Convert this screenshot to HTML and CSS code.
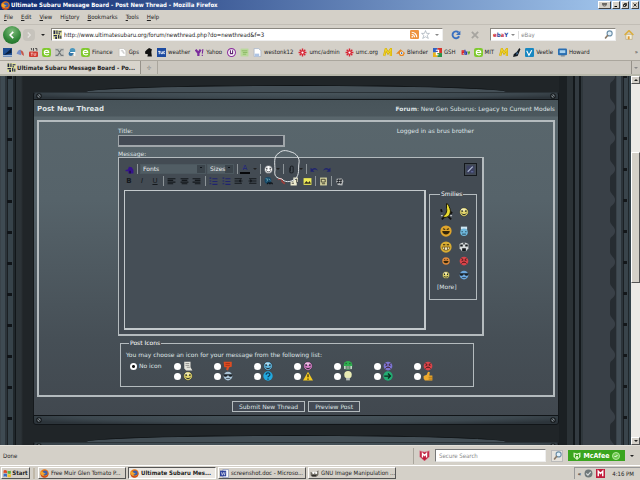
FILE: index.html
```html
<!DOCTYPE html>
<html lang="en">
  <head>
    <meta charset="UTF-8" />
    <meta name="viewport" content="width=device-width, initial-scale=1.0" />
    <title>Ultimate Subaru Message Board - Post New Thread</title>
    <link rel="stylesheet" href="styles.css" />
  </head>
  <body>
    <!-- shared icons -->
    <svg class="sprite" aria-hidden="true">
      <symbol id="fox" viewBox="0 0 16 16">
        <circle cx="8" cy="8" r="7.5" fill="#e2751c" />
        <circle cx="9" cy="7" r="4.5" fill="#3a5fae" />
        <path d="M1 4c2 1 4 0 6 3l3 1c-1 2-4 1-4 3s4 2 7-1c-1 4-10 6-12-2z" fill="#f5a52b" />
        <path d="M1 8c0 5 4 8 8 7s6-4 6-8c-1 4-4 6-7 6S2 11 1 8z" fill="#c9461a" />
      </symbol>
      <symbol id="site" viewBox="0 0 16 16">
        <path fill="#dfe0a0" d="M0 0h16v16H0z" />
        <path fill="#20264c" d="M1 1h3v6H1zM6 1h2v6H6zM10 2h5v2h-5zM10 5h2v3h-2zM1 9h6v2H1zM4 12h3v4H4zM9 9h2v6H9zM12 10h3v2h-3zM12 13h3v2h-3z" />
      </symbol>
      <symbol id="smile" viewBox="0 0 16 16">
        <circle cx="8" cy="8" r="7" fill="currentColor" stroke="#2d343b" stroke-width="1" />
        <ellipse cx="7" cy="4.500" rx="4" ry="2" fill="#fff" opacity=".5" />
        <path d="M5 5v3M11 5v3" stroke="#23272b" stroke-width="2" />
        <path d="M4 10c2 3 6 3 8 0" fill="none" stroke="#23272b" stroke-width="1.500" />
      </symbol>
      <symbol id="grin" viewBox="0 0 16 16">
        <circle cx="8" cy="8" r="7.500" fill="currentColor" />
        <path d="M4 5l3 1M12 5L9 6" stroke="#33260b" stroke-width="1.500" />
        <path d="M3 8h10c0 6-10 6-10 0z" fill="#33260b" />
      </symbol>
      <symbol id="sad" viewBox="0 0 16 16">
        <circle cx="8" cy="8" r="7" fill="currentColor" />
        <path d="M4 4l3 2M12 4L9 6M5 6v2M11 6v2" stroke="#3b1414" stroke-width="1.500" />
        <path d="M4 12c2-3 6-3 8 0" fill="none" stroke="#3b1414" stroke-width="1.500" />
      </symbol>
      <symbol id="cool" viewBox="0 0 16 16">
        <circle cx="8" cy="8" r="7" fill="currentColor" />
        <path d="M1 5h14v2c-1 3-5 3-6 0H7c-1 3-5 3-6 0z" fill="#1b2228" />
        <path d="M5 12h6" stroke="#1b2228" />
      </symbol>
      <symbol id="lines" viewBox="0 0 16 16">
        <path d="M1 3h14M1 6h10M1 9h14M1 12h10" stroke="currentColor" stroke-width="2" />
      </symbol>
      <symbol id="list" viewBox="0 0 16 16">
        <path d="M1 2h3M1 7h3M1 12h3M6 3h9M6 8h9M6 13h9" stroke="currentColor" stroke-width="2" />
      </symbol>
      <symbol id="indent" viewBox="0 0 16 16">
        <path d="M2 3h13M8 7h7M2 11h13M1 7h6M4 5l3 2-3 2" fill="none" stroke="currentColor" stroke-width="2" />
      </symbol>
      <symbol id="undo" viewBox="0 0 16 16">
        <path d="M1 5v7h7L5 9c3-2 6-1 9 1-2-5-6-6-10-3z" fill="currentColor" />
      </symbol>
      <symbol id="burst" viewBox="0 0 16 16">
        <path d="M8 1v14M1 8h14M3 3l10 10M13 3L3 13" stroke="#d82433" stroke-width="2.500" />
        <circle cx="8" cy="8" r="2" fill="#fff" />
      </symbol>
      <symbol id="emm" viewBox="0 0 16 16">
        <path d="M2 14l3-12 4 7 5-7v12" fill="none" stroke="#d0a800" stroke-width="4" />
        <path d="M2 14l3-12 4 7 5-7v12" fill="none" stroke="#efd42c" stroke-width="2" />
      </symbol>
      <symbol id="ebadge" viewBox="0 0 16 16">
        <rect width="16" height="16" rx="4" fill="#7fc92e" />
        <path d="M4 8h8c0-5-8-5-8 0s6 5 8 3" fill="none" stroke="#fff" stroke-width="2" />
      </symbol>
      <symbol id="loupe" viewBox="0 0 16 16">
        <circle cx="10" cy="6" r="4.500" fill="#e1f0fa" stroke="#6c8fa8" stroke-width="2" />
        <path d="M7 9l-5 6" stroke="#8a7a68" stroke-width="3" />
      </symbol>
      <symbol id="rivet" viewBox="0 0 16 16">
        <circle cx="8" cy="8" r="6" fill="#778086" stroke="#14181a" stroke-width="3" />
        <path d="M4 4l8 8" stroke="#14181a" stroke-width="2" />
      </symbol>
      <symbol id="shield" viewBox="0 0 16 16">
        <path d="M1 1l7 2 7-2v9l-7 6-7-6z" fill="#c01c3c" stroke="#d9a5ae" />
        <path d="M5 11V5l3 3 3-3v6" fill="none" stroke="#fff" stroke-width="2" />
      </symbol>
    </svg>

    <header class="titlebar">
      <svg class="icon"><use href="#fox" /></svg>
      <h1>Ultimate Subaru Message Board - Post New Thread - Mozilla Firefox</h1>
      <div class="winbtns">
        <button class="wide" aria-label="Roll up"><svg viewBox="0 0 12 8"><path d="M1 1h10M2 3h8L8 6H4z" fill="none" stroke="#000" /></svg></button>
        <button aria-label="Minimize"><svg viewBox="0 0 8 8"><path d="M1 7h5" stroke="#000" stroke-width="2" /></svg></button>
        <button aria-label="Restore"><svg viewBox="0 0 8 8"><path d="M3 3V1h4v4H5M1 3h4v4H1z" fill="none" stroke="#000" stroke-width="1.500" /></svg></button>
        <button class="close" aria-label="Close"><svg viewBox="0 0 8 8"><path d="M1 1l6 6M7 1L1 7" stroke="#000" stroke-width="1.500" /></svg></button>
      </div>
    </header>

    <nav class="menubar">
      <a href="#"><u>F</u>ile</a>
      <a href="#"><u>E</u>dit</a>
      <a href="#"><u>V</u>iew</a>
      <a href="#">Hi<u>s</u>tory</a>
      <a href="#"><u>B</u>ookmarks</a>
      <a href="#"><u>T</u>ools</a>
      <a href="#"><u>H</u>elp</a>
    </nav>

    <div class="navbar">
      <button class="back" aria-label="Back"><svg viewBox="0 0 16 16"><path d="M10 3L5 8l5 5" fill="none" stroke="#fff" stroke-width="2.500" /></svg></button>
      <button class="forward" aria-label="Forward"><svg viewBox="0 0 16 16"><path d="M6 4l4 4-4 4" fill="none" stroke="#e6e4df" stroke-width="2" /></svg></button>
      <span class="arrow"></span>
      <div class="urlbox">
        <svg class="icon"><use href="#site" /></svg>
        <input type="text" aria-label="Address" value="http://www.ultimatesubaru.org/forum/newthread.php?do=newthread&amp;f=3" />
        <svg class="icon" viewBox="0 0 16 16"><rect width="16" height="16" rx="2" fill="#ee9440" /><path d="M3 8c3 0 5 2 5 5M3 4c5 0 9 4 9 9" fill="none" stroke="#fff" stroke-width="2" /><circle cx="4" cy="12" r="1.500" fill="#fff" /></svg>
        <svg class="icon" viewBox="0 0 16 16"><path d="M8 1l2 5h5l-4 3.500 2 5.500-5-3-5 3 2-5.500L1 6h5z" fill="#fff" stroke="#8b98a4" /></svg>
        <span class="arrow light"></span>
      </div>
      <button class="plain" aria-label="Reload"><svg viewBox="0 0 16 16"><path d="M13 10a5.500 5.500 0 1 1-1-6" fill="none" stroke="#3a70c0" stroke-width="3" /><path d="M15 1v7H8z" fill="#3a70c0" /></svg></button>
      <button class="plain" aria-label="Stop"><svg viewBox="0 0 16 16"><path d="M3 3l10 10M13 3L3 13" stroke="#a7a5a0" stroke-width="3" /></svg></button>
      <div class="searchbox">
        <span class="engine"><i>e</i>b<i>a</i>Y</span>
        <span class="arrow light"></span>
        <input type="text" aria-label="Search" placeholder="eBay" />
        <svg class="icon"><use href="#loupe" /></svg>
      </div>
      <button class="plain home" aria-label="Home"><svg viewBox="0 0 16 16"><path d="M3 7h10v8H3z" fill="#f6f0d8" stroke="#b4a476" /><path d="M1 8l7-7 7 7" fill="none" stroke="#dcae3c" stroke-width="2.500" /><path d="M6 10h3v5H6z" fill="#e09a2c" /></svg></button>
    </div>

    <nav class="bookmarks">
      <a href="#" aria-label="Sail"><svg class="icon" viewBox="0 0 16 16"><path d="M0 0h16v16H0z" fill="#1f4f92" /><path d="M1 13L15 1v8z" fill="#0a2040" /><path d="M0 13h16v2H0z" fill="#e8eef4" /></svg></a>
      <a href="#" aria-label="Bird"><svg class="icon" viewBox="0 0 16 16"><path d="M1 10c2-6 6-8 8-6v9z" fill="#7690c8" /><path d="M8 4c4 0 6 4 6 10l-4-3z" fill="#c5564a" /></svg></a>
      <a href="#" aria-label="Video"><svg class="icon" viewBox="0 0 16 16"><path d="M4 0l1 4M8 0v5M11 1h3v4" stroke="#333" stroke-width="1.500" fill="none" /><rect y="6" width="16" height="10" rx="2" fill="#d03a30" /><path d="M3 9h4M5 9v5M9 9v4h3V9" stroke="#fff" fill="none" /></svg></a>
      <a href="#" aria-label="E"><svg class="icon"><use href="#ebadge" /></svg></a>
      <a href="#" aria-label="X"><svg class="icon" viewBox="0 0 16 16"><path d="M0 0h16v16H0z" fill="#c4c5c0" /><path d="M1 3h4l6 10h4M15 3h-4L5 13H1" fill="none" stroke="#73787a" stroke-width="2" /></svg></a>
      <a href="#" aria-label="Swirl"><svg class="icon" viewBox="0 0 16 16"><circle cx="8" cy="5" r="5" fill="#4b97bd" /><circle cx="5" cy="10" r="4" fill="#3476a8" /><path d="M4 8h8v6" fill="none" stroke="#fff" stroke-width="2" /></svg></a>
      <a href="#"><svg class="icon"><use href="#ebadge" /></svg>Finance</a>
      <a href="#"><svg class="icon" viewBox="0 0 16 16"><path d="M2 1h8l4 4v10H2z" fill="#fff" stroke="#b8b6b0" /><path d="M5 5h4v4h3" fill="none" stroke="#999" /></svg>Gps</a>
      <a href="#" aria-label="Cat"><svg class="icon" viewBox="0 0 16 16"><path d="M5 3l4-3 5 2-1 5 1 8H6l1-4-5-1V6z" fill="#111" /></svg></a>
      <a href="#"><svg class="icon" viewBox="0 0 16 16"><path d="M0 0h16v16H0z" fill="#1d4ba0" /><path d="M2 6h4M4 6v5M7 6v4h3V6M14 6h-2v4h2" fill="none" stroke="#fff" stroke-width="1.500" /></svg>weather</a>
      <a href="#"><svg class="icon" viewBox="0 0 16 16"><path d="M1 3l5 6 4-6M6 9v5" fill="none" stroke="#7b2c9d" stroke-width="4" /><path d="M14 2l-1 8M12 13h2" stroke="#7b2c9d" stroke-width="2" /></svg>Yahoo</a>
      <a href="#" aria-label="Power"><svg class="icon" viewBox="0 0 16 16"><circle cx="8" cy="8" r="7" fill="#fff" stroke="#8a2f9b" stroke-width="2" /><path d="M6 4v6h4V4" fill="none" stroke="#5d2170" stroke-width="2" /></svg></a>
      <a href="#" aria-label="Notes"><svg class="icon" viewBox="0 0 16 16"><path d="M1 1h14v14H1z" fill="#b9d99a" /><path d="M3 5h10M5 8h8M5 11h6" stroke="#6ea544" /></svg></a>
      <a href="#"><svg class="icon" viewBox="0 0 16 16"><path d="M2 1h8l4 4v10H2z" fill="#fff" stroke="#8fa2c0" /><path d="M3 10h8v5H3z" fill="#aec4e4" /></svg>westonk12</a>
      <a href="#"><svg class="icon"><use href="#burst" /></svg>umc/admin</a>
      <a href="#"><svg class="icon"><use href="#burst" /></svg>umc.org</a>
      <a href="#" aria-label="M"><svg class="icon"><use href="#emm" /></svg></a>
      <a href="#"><svg class="icon" viewBox="0 0 16 16"><path d="M0 10l8-8 8 7-3 5H7L5 10z" fill="#e58722" /><circle cx="10" cy="9" r="3" fill="#fff" /><circle cx="10" cy="9" r="1.500" fill="#2560a5" /></svg>Blender</a>
      <a href="#"><svg class="icon" viewBox="0 0 16 16"><path d="M0 0h8v8H0z" fill="#2f62c4" /><path d="M8 0h8v9H8z" fill="#d6332b" /><path d="M0 8h8v8H0z" fill="#e9b31b" /><path d="M8 9h8v7H8z" fill="#2c9147" /><path d="M5 4h5v4H6v4h4" fill="none" stroke="#fff" stroke-width="2" /></svg>GSH</a>
      <a href="#" aria-label="eBay"><svg class="icon" viewBox="0 0 16 16"><path d="M1 8h4V5H2v6h3" fill="none" stroke="#d22" stroke-width="2" /><path d="M7 3v8h3V7H7" fill="none" stroke="#23a" stroke-width="2" /><path d="M12 6l2 4 2-4" fill="none" stroke="#6a2" stroke-width="2" /></svg></a>
      <a href="#"><svg class="icon"><use href="#ebadge" /></svg>MIT</a>
      <a href="#" aria-label="M"><svg class="icon"><use href="#emm" /></svg></a>
      <a href="#" aria-label="Pen"><svg class="icon" viewBox="0 0 16 16"><path d="M13 0l2 2-5 12-8 2 1-5 6-5z" fill="#141a20" /><path d="M8 7l3 2-3 4" fill="#4c7dac" /></svg></a>
      <a href="#"><svg class="icon" viewBox="0 0 16 16"><rect width="16" height="16" rx="2" fill="#1887c0" /><path d="M3 5l4 8 5-9" fill="none" stroke="#fff" stroke-width="2" /></svg>Veetle</a>
      <a href="#"><svg class="icon" viewBox="0 0 16 16"><rect y="1" width="16" height="12" rx="2" fill="#2b6fb2" /><path d="M3 4h10v5H3z" fill="#a9d0ec" /><path d="M5 14h7" stroke="#6a7c8c" stroke-width="2" /></svg>Howard</a>
      <span class="more">»</span>
    </nav>

    <div class="tabs">
      <div class="tab"><svg class="icon"><use href="#site" /></svg>Ultimate Subaru Message Board - Po...</div>
      <button class="newtab" aria-label="New tab">✢</button>
      <button class="alltabs" aria-label="All tabs"><span class="arrow light"></span></button>
    </div>

    <div class="viewport">
      <div class="rail left"></div>
      <main class="page">
        <div class="plate"></div>
        <div class="frame top">
          <svg class="icon"><use href="#rivet" /></svg>
          <svg class="icon"><use href="#rivet" /></svg>
        </div>
        <div class="panel">
          <div class="heading">
            <h2>Post New Thread</h2>
            <p><b>Forum</b>: New Gen Subarus: Legacy to Current Models</p>
          </div>
          <form class="thread" id="thread">
            <div class="fields">
              <div class="meta">
                <div class="titlefield">
                  <label for="title">Title:</label>
                  <input type="text" id="title" />
                </div>
                <p>Logged in as brus brother</p>
              </div>
              <label for="message">Message:</label>
              <div class="editor">
                <div class="tools">
                  <button type="button" aria-label="Remove formatting"><svg viewBox="0 0 16 16"><path d="M1 9l4-1 2-5 5 1 3 5v6H6v-4H1z" fill="#35128c" /><path d="M9 10v5" stroke="#15082d" stroke-width="2" /></svg></button>
                  <span class="sep"></span>
                  <select class="fonts" aria-label="Font"><option>Fonts</option></select>
                  <select class="sizes" aria-label="Size"><option>Sizes</option></select>
                  <span class="sep"></span>
                  <button type="button" class="color" aria-label="Color">A</button>
                  <span class="arrow"></span>
                  <span class="sep"></span>
                  <button type="button" class="white" aria-label="Smilies"><svg><use href="#smile" /></svg></button>
                  <span class="arrow"></span>
                  <span class="sep"></span>
                  <button type="button" aria-label="Attach"><svg viewBox="0 0 16 16"><path d="M5 5v7c0 3 6 3 6 0V4c0-3-5-3-5 0v7" fill="none" stroke="#1c2126" stroke-width="2" /></svg></button>
                  <span class="arrow"></span>
                  <span class="sep"></span>
                  <button type="button" class="navy" aria-label="Undo"><svg><use href="#undo" /></svg></button>
                  <button type="button" class="navy flip" aria-label="Redo"><svg><use href="#undo" /></svg></button>
                  <button type="button" class="mode" aria-label="Switch mode"><svg viewBox="0 0 16 16"><path d="M1 1h14v14H1z" fill="#3c4161" /><path d="M3 12l9-9" stroke="#aebad0" stroke-width="2" /><path d="M9 12h4" stroke="#6670a0" stroke-width="2" /></svg></button>
                </div>
                <div class="tools">
                  <button type="button" aria-label="Bold"><b>B</b></button>
                  <button type="button" aria-label="Italic"><i>I</i></button>
                  <button type="button" aria-label="Underline"><u>U</u></button>
                  <span class="sep"></span>
                  <button type="button" aria-label="Left"><svg><use href="#lines" /></svg></button>
                  <button type="button" aria-label="Center"><svg viewBox="0 0 16 16"><path d="M1 3h14M3 6h10M1 9h14M3 12h10" stroke="#15191d" stroke-width="2" /></svg></button>
                  <button type="button" class="flip" aria-label="Right"><svg><use href="#lines" /></svg></button>
                  <span class="sep"></span>
                  <button type="button" class="navy" aria-label="Numbers"><svg><use href="#list" /></svg></button>
                  <button type="button" class="navy" aria-label="Bullets"><svg><use href="#list" /></svg></button>
                  <button type="button" class="flip" aria-label="Outdent"><svg><use href="#indent" /></svg></button>
                  <button type="button" aria-label="Indent"><svg><use href="#indent" /></svg></button>
                  <span class="sep"></span>
                  <button type="button" aria-label="Link"><svg viewBox="0 0 16 16"><circle cx="7" cy="6" r="6" fill="#174866" /><path d="M3 3l4 1-2 4M9 3l2 3" stroke="#69a8b8" fill="none" stroke-width="1.500" /><path d="M6 13c0-4 5-3 5 0M10 13c0-4 5-3 5 0" fill="none" stroke="#0b1015" stroke-width="2" /></svg></button>
                  <button type="button" aria-label="Unlink"><svg viewBox="0 0 16 16"><path d="M2 5c4-5 8 0 7 3l5 4" fill="none" stroke="#98403c" stroke-width="3" /></svg></button>
                  <button type="button" aria-label="Email"><svg viewBox="0 0 16 16"><path d="M6 1h8v8H6zM1 8h11v7H1z" fill="#eeeccf" /><path d="M8 4h4v6M3 11h4" fill="none" stroke="#222" stroke-width="1.500" /></svg></button>
                  <button type="button" aria-label="Image"><svg viewBox="0 0 16 16"><path d="M1 2h14v12H1z" fill="#ecea55" /><path d="M2 12l4-5 3 3 3-3 2 5z" fill="#342f20" /></svg></button>
                  <span class="sep"></span>
                  <button type="button" aria-label="Quote"><svg viewBox="0 0 16 16"><path d="M2 1h12v14H2z" fill="#d8d5a0" /><path d="M4 4h7v5H4zM5 12h6" fill="none" stroke="#302f24" stroke-width="1.500" /></svg></button>
                  <span class="sep"></span>
                  <button type="button" aria-label="Code"><svg viewBox="0 0 16 16"><path d="M3 3l9-1 3 5-2 8-8-1-3-5z" fill="#b7babb" /><path d="M7 3L5 12M11 3l-1 9M3 6h9M3 10h9" stroke="#14181c" stroke-width="1.500" /></svg></button>
                </div>
                <div class="writing">
                  <textarea id="message"></textarea>
                  <fieldset class="smilies">
                    <legend>Smilies</legend>
                    <div class="smilegrid">
                      <svg class="banana" viewBox="0 0 14 18"><path d="M2 9L1 6M11 11l2-2M5 14l-3 3M9 14l3 3" stroke="#111" stroke-width="2" /><path d="M7 0l2 1c1 3 3 6 2 9-1 4-5 6-8 4 3-2 5-5 4-9z" fill="#e8da2f" stroke="#171507" /><path d="M1 13h2M11 13h2" stroke="#eee" /></svg>
                      <svg class="c-yellow"><use href="#smile" /></svg>
                      <svg class="c-gold big"><use href="#grin" /></svg>
                      <svg class="c-sky" viewBox="0 0 16 16"><path d="M3 1h10v5H3z" fill="#cfe6f2" /><circle cx="8" cy="10" r="6" fill="#6fb8dd" /><path d="M5 8v2M11 8v2M5 13h6" stroke="#24404f" stroke-width="1.500" /></svg>
                      <svg class="c-gold big" viewBox="0 0 16 16"><circle cx="8" cy="8" r="7.500" fill="#d9ad33" /><path d="M4 5h3M9 5h3" stroke="#33260b" stroke-width="1.500" /><path d="M3 8h10c0 6-10 6-10 0z" fill="#e8e2c0" stroke="#6d5110" /><path d="M6 8v4M10 8v4" stroke="#6d5110" /></svg>
                      <svg viewBox="0 0 16 16"><path d="M1 3l4-2h6l4 2v7l-4 5H5l-4-5z" fill="#d5dadb" /><path d="M2 4h4v3H2zM10 4h4v3h-4zM5 10h6v5H5zM7 1h2v3H7z" fill="#14191d" /></svg>
                      <svg class="c-orange small"><use href="#grin" /></svg>
                      <svg class="c-red"><use href="#sad" /></svg>
                      <svg class="c-yellow small"><use href="#smile" /></svg>
                      <svg class="c-blue"><use href="#cool" /></svg>
                    </div>
                    <a href="#">[More]</a>
                  </fieldset>
                </div>
                <!-- pen mark round the attachment button -->
                <svg class="penmark" viewBox="0 0 26 34"><path d="M5 4c4-4 9-2 12-1 5 1 9 6 8 11-1 5 1 12-4 16-5 4-11 3-13 0-6-1-8-3-7-9 0-6-2-14 4-17z" fill="none" stroke="#dfe3e5" /></svg>
              </div>
              <fieldset class="posticons">
                <legend>Post Icons</legend>
                <p>You may choose an icon for your message from the following list:</p>
                <div class="icongrid">
                  <label class="none"><input type="radio" name="icon" checked /> No icon</label>
                  <label><input type="radio" name="icon" aria-label="Post" /><svg viewBox="0 0 16 16"><path d="M2 1h10v9l3 5H5L2 12z" fill="#e4e4dc" /><path d="M4 4h6M4 7h6M6 10h5" stroke="#666" /></svg></label>
                  <label><input type="radio" name="icon" aria-label="Thumbs down" /><svg viewBox="0 0 16 16"><path d="M1 1h13v8l-4 1-2 5-3-1 1-4H2z" fill="#dd4c22" /><path d="M4 4h7M4 7h7" stroke="#8a2813" /></svg></label>
                  <label class="c-sky"><input type="radio" name="icon" aria-label="Wink" /><svg><use href="#smile" /></svg></label>
                  <label class="c-pink"><input type="radio" name="icon" aria-label="Embarrassed" /><svg><use href="#smile" /></svg></label>
                  <label><input type="radio" name="icon" aria-label="Big grin" /><svg viewBox="0 0 16 16"><circle cx="8" cy="7" r="7" fill="#2fae4f" /><path d="M2 8h12v5H2z" fill="#e7efe7" /><path d="M5 3v2M11 3v2M5 8v5M8 8v5M11 8v5" stroke="#1c4427" stroke-width="1.500" /></svg></label>
                  <label class="c-violet"><input type="radio" name="icon" aria-label="Frown" /><svg><use href="#sad" /></svg></label>
                  <label class="c-red"><input type="radio" name="icon" aria-label="Mad" /><svg><use href="#sad" /></svg></label>
                  <label class="c-yellow"><input type="radio" name="icon" aria-label="Smile" /><svg><use href="#smile" /></svg></label>
                  <label class="c-ice"><input type="radio" name="icon" aria-label="Cool" /><svg><use href="#cool" /></svg></label>
                  <label><input type="radio" name="icon" aria-label="Question" /><svg viewBox="0 0 16 16"><circle cx="8" cy="8" r="7.500" fill="#21a9df" /><path d="M5 6c0-4 6-4 6 0 0 2-3 2-3 4M8 12v2" fill="none" stroke="#0f4060" stroke-width="2" /></svg></label>
                  <label><input type="radio" name="icon" aria-label="Exclamation" /><svg viewBox="0 0 16 16"><path d="M8 1l8 14H0z" fill="#f2c922" /><path d="M8 5v5M8 12v2" stroke="#332a08" stroke-width="2" /></svg></label>
                  <label><input type="radio" name="icon" aria-label="Lightbulb" /><svg viewBox="0 0 16 16"><circle cx="8" cy="6" r="6" fill="#e9ebb4" /><path d="M5 11h6v4H5z" fill="#b5bbb9" /></svg></label>
                  <label><input type="radio" name="icon" aria-label="Arrow" /><svg viewBox="0 0 16 16"><circle cx="8" cy="8" r="7.500" fill="#22ad73" /><path d="M2 8h10M8 4l4 4-4 4" fill="none" stroke="#0b2d20" stroke-width="2" /></svg></label>
                  <label><input type="radio" name="icon" aria-label="Thumbs up" /><svg viewBox="0 0 16 16"><path d="M1 8l5-2 2-5 3 1-1 5h5v8H3L1 12z" fill="#eeaa2e" /><path d="M9 10h6M9 13h6" stroke="#8b5c10" /></svg></label>
                </div>
              </fieldset>
            </div>
          </form>
          <div class="actions">
            <button form="thread" type="button">Submit New Thread</button>
            <button form="thread" type="button">Preview Post</button>
          </div>
        </div>
        <div class="frame bottom">
          <svg class="icon"><use href="#rivet" /></svg>
          <svg class="icon"><use href="#rivet" /></svg>
        </div>
        <div class="plate next"></div>
        <div class="frame top">
          <svg class="icon"><use href="#rivet" /></svg>
          <svg class="icon"><use href="#rivet" /></svg>
        </div>
      </main>
      <div class="ribs"></div>
      <div class="wall"></div>
      <svg class="scallop" aria-hidden="true">
        <defs>
          <pattern id="wave" width="8" height="31" patternUnits="userSpaceOnUse"><path d="M8 0H6C6 5 1 5 1 9v12c0 4 5 5 5 10h2z" fill="#262c31" /></pattern>
        </defs>
        <rect width="100%" height="100%" fill="url(#wave)" />
      </svg>
      <div class="rail right"></div>
      <div class="scrollbar">
        <button aria-label="Scroll up"><span class="arrow up"></span></button>
        <div class="track"><div class="thumb"></div></div>
        <button aria-label="Scroll down"><span class="arrow"></span></button>
      </div>
    </div>

    <footer class="status">
      <span class="done">Done</span>
      <div class="mcafee">
        <svg class="icon"><use href="#shield" /></svg>
        <input type="text" aria-label="Secure Search" placeholder="Secure Search" />
        <button class="go" aria-label="Search"><svg class="icon"><use href="#loupe" /></svg></button>
        <button class="brand"><svg viewBox="0 0 16 16"><path d="M1 1l7 2 7-2v9l-7 6-7-6z" fill="#d4f0bf" /><path d="M5 11V5l3 3 3-3v6" fill="none" stroke="#37a51d" stroke-width="2" /></svg>McAfee<svg viewBox="0 0 16 16"><circle cx="8" cy="8" r="7" fill="#6fca50" stroke="#b4e89e" stroke-width="2" /><path d="M5 8l2 2 4-4" fill="none" stroke="#fff" stroke-width="2" /></svg></button>
        <span class="arrow"></span>
      </div>
    </footer>

    <div class="taskbar">
      <button class="start"><svg class="icon" viewBox="0 0 16 16"><path d="M1 3c2-2 4-1 6 0v5c-2-1-4-2-6 0z" fill="#df4b26" /><path d="M8 3c2 1 4 1 6 0v5c-2 1-4 1-6 0z" fill="#5fae3a" /><path d="M1 9c2-2 4-1 6 0v5c-2-1-4-2-6 0z" fill="#3969c4" /><path d="M8 9c2 1 4 1 6 0v5c-2 1-4 1-6 0z" fill="#efc12c" /></svg>Start</button>
      <span class="grip"></span>
      <button class="task"><svg class="icon"><use href="#fox" /></svg>Free Muir Glen Tomato P...</button>
      <button class="task active"><svg class="icon"><use href="#fox" /></svg>Ultimate Subaru Mes...</button>
      <button class="task"><svg class="icon" viewBox="0 0 16 16"><path d="M5 1h10v14H5z" fill="#fff" stroke="#6c7fb0" /><path d="M0 3h11v10H0z" fill="#2b3f9a" /><path d="M2 5l2 6 2-5 2 5 1-6" fill="none" stroke="#fff" /></svg>screenshot.doc - Microso...</button>
      <button class="task"><svg class="icon" viewBox="0 0 16 16"><path d="M1 5l4 2 5-1 5-4v8c-3 5-11 5-14 1z" fill="#6f6b62" /><circle cx="6" cy="7" r="2" fill="#fff" /><circle cx="11" cy="7" r="2" fill="#fff" /><path d="M3 12h8" stroke="#222" stroke-width="2" /></svg>GNU Image Manipulation ...</button>
      <div class="tray">
        <b>«</b>
        <svg class="icon" viewBox="0 0 16 16"><circle cx="8" cy="8" r="7" fill="#70787a" /><path d="M4 8l3 3 5-6" fill="none" stroke="#d7dcdc" stroke-width="2" /></svg>
        <svg class="icon" viewBox="0 0 16 16"><path d="M0 0h16v16H0z" fill="#c01c3c" /><path d="M4 13V4l4 4 4-4v9" fill="none" stroke="#fff" stroke-width="2.500" /></svg>
        <time>4:16 PM</time>
      </div>
    </div>
  </body>
</html>
```
FILE: styles.css
```css
* {
  margin: 0;
  padding: 0;
  box-sizing: border-box;
}
body {
  height: 100vh;
  display: flex;
  flex-direction: column;
  overflow: hidden;
  background: #d4d0c8;
  color: #222;
  font: 6px/8px "DejaVu Sans Condensed", "DejaVu Sans", sans-serif;
}
button,
input,
select,
textarea {
  font: inherit;
  color: inherit;
  border: 0;
  background: none;
  border-radius: 0;
  outline: 0;
}
button {
  display: flex;
  align-items: center;
  justify-content: center;
}
a {
  color: inherit;
  text-decoration: none;
}
svg {
  display: block;
  flex: none;
}
.sprite {
  position: absolute;
  width: 0;
  height: 0;
}
.icon {
  width: 9px;
  height: 9px;
}
.arrow {
  flex: none;
  border: 2px solid transparent;
  border-top-color: #222;
  border-bottom: 0;
}
.arrow.light {
  border-top-color: #888;
}
.arrow.up {
  border-top: 0;
  border-bottom: 2px solid #222;
}

/* window chrome */
.titlebar {
  display: flex;
  align-items: center;
  height: 10px;
  padding: 0 1px;
  gap: 1px;
  color: #fff;
  background: linear-gradient(90deg, #0d286e, #a6caf0);
}
.titlebar h1 {
  flex: 1;
  font-size: 6px;
  line-height: 8px;
}
.winbtns {
  display: flex;
  gap: 1px;
}
.winbtns button {
  width: 8px;
  height: 8px;
  padding: 1px;
  background: #d4d0c8;
  border: 1px solid #fff;
  border-right-color: #404040;
  border-bottom-color: #404040;
}
.winbtns button.wide {
  width: 13px;
}
.winbtns .close {
  margin-left: 1px;
}
.winbtns svg {
  width: 100%;
  height: 100%;
}
.menubar {
  display: flex;
  align-items: center;
  gap: 8px;
  height: 14px;
  padding-left: 4px;
}
.navbar {
  display: flex;
  align-items: center;
  gap: 6px;
  height: 20px;
  padding: 0 5px 0 3px;
  border-top: 1px solid #c2beb6;
}
.navbar .back {
  width: 18px;
  height: 18px;
  border-radius: 50%;
  background: radial-gradient(circle at 50% 30%, #7fbd7c, #2f8537 60%, #1d6426);
}
.back svg,
.forward svg,
.plain svg {
  width: 10px;
  height: 10px;
}
.navbar .forward {
  width: 12px;
  height: 12px;
  margin-left: -4px;
  border-radius: 4px;
  background: #c6c3bc;
}
.urlbox,
.searchbox {
  display: flex;
  align-items: center;
  height: 13px;
  background: #fff;
  border: 1px solid #8a8780;
  border-right-color: #eee;
  border-bottom-color: #eee;
}
.urlbox {
  flex: 1;
  gap: 2px;
  padding: 0 3px 0 1px;
}
.urlbox .arrow {
  margin-left: 3px;
}
.urlbox input {
  flex: 1;
  min-width: 0;
}
.plain {
  width: 13px;
}
.searchbox {
  width: 126px;
  gap: 3px;
  padding: 0 2px;
}
.navbar .plain + .searchbox {
  margin-left: 3px;
}
.engine {
  color: #24459c;
  font-weight: bold;
  line-height: 6px;
}
.engine i {
  color: #c8283c;
  font-style: normal;
}
.searchbox input {
  flex: 1;
  min-width: 0;
  padding-left: 2px;
  border-left: 1px solid #ddd;
}
input::placeholder {
  color: #888;
  opacity: 1;
}
.bookmarks {
  display: flex;
  align-items: center;
  gap: 4px;
  height: 16px;
  padding: 0 2px 0 3px;
}
.bookmarks a {
  display: flex;
  align-items: center;
  gap: 2px;
  white-space: nowrap;
}
.bookmarks a:not([aria-label]) {
  margin-right: 1px;
}
.bookmarks .more {
  margin-left: auto;
}
.tabs {
  display: flex;
  height: 16px;
  border-top: 1px solid #aaa69d;
  border-bottom: 2px solid #b8b8ab;
  background: #cbc7bf;
}
.tab {
  display: flex;
  align-items: center;
  gap: 1px;
  width: 141px;
  padding-left: 7px;
  font-weight: bold;
  background: #d8d4cc;
  border-right: 1px solid #96928a;
  white-space: nowrap;
}
.newtab {
  width: 17px;
  color: #888;
  border-right: 1px solid #aaa69d;
}
.alltabs {
  width: 9px;
  margin-left: auto;
  border-left: 1px solid #96928a;
}

/* page area */
.viewport {
  flex: 1;
  min-height: 0;
  display: flex;
  background: #202528;
  color: #dfe3e5;
  font-family: "DejaVu Sans", sans-serif;
  overflow: hidden;
}
.rail {
  flex: none;
  width: 15px;
  background:
    repeating-linear-gradient(180deg, #14181b 0 3px, transparent 3px 31px) 7px -1px / 4px 105% no-repeat,
    linear-gradient(90deg, #394249 0 1px, #424d55 1px 5px, #2c343a 5px 7px, #1b2024 7px 8px, #39444b 8px 12px, #20272b 12px 13px, #34424a 13px);
}
.rail.left {
  width: 33px;
  background:
    repeating-linear-gradient(180deg, #101418 0 3px, transparent 3px 31px) 7px 0 / 5px 105% no-repeat,
    linear-gradient(90deg, #394249 0 1px, #3f4b53 1px 5px, #2c343a 5px 7px, #1b2024 7px 8px, #37434a 8px 13px, #20272b 13px 15px, #12171a 15px 16px, #2c3337 16px 21px, #202528 23px);
}
.page {
  flex: 1;
  min-width: 0;
}
/* curved plate that sits behind the frame */
.plate {
  height: 16px;
  background: #202528;
  display: flex;
  align-items: flex-end;
  justify-content: center;
}
.plate::after {
  content: "";
  width: 80%;
  height: 6px;
  border-top: 1px solid #0e1214;
  border-radius: 50% 50% 0 0 / 100% 100% 0 0;
  background: #444f56;
}
.plate.next {
  height: 17px;
}
.frame {
  display: flex;
  align-items: center;
  justify-content: space-between;
  height: 8px;
  padding: 0 2px;
  border: 1px solid #111518;
  background: radial-gradient(ellipse at 50% 0, #48555c 0, #3d484f 60%, #2c343a 85%);
}
.frame.top {
  border-top-color: #2a3237;
  border-radius: 3px 3px 0 0;
}
.frame.bottom {
  height: 10px;
  border-radius: 0 0 3px 3px;
}
.frame .icon {
  width: 6px;
  height: 6px;
}
.panel {
  padding: 0 3px;
  border: 1px solid #15191c;
  border-width: 0 1px;
  background: linear-gradient(180deg, #48545a 0, #4b575d 16px, #59666c 17px, #56636a 100px, #464f56 240px, #41484f);
}
.heading {
  display: flex;
  align-items: center;
  justify-content: space-between;
  height: 17px;
  margin-bottom: 3px;
}
.heading h2 {
  font-size: 7px;
  line-height: 8px;
}
.thread {
  padding: 5px 0 8px;
  border: 2px solid #b4bbbe;
}
.fields {
  max-width: 356px;
  margin: 0 auto;
}
.meta {
  display: flex;
  justify-content: space-between;
  margin-bottom: 3px;
}
.titlefield {
  display: flex;
  flex-direction: column;
}
.meta input {
  width: 167px;
  height: 12px;
  background: #434a54;
  border: 1px solid #a0a6aa;
  border-width: 1px 2px 2px 1px;
}
.fields > label {
  display: block;
  line-height: 7px;
}
.editor {
  position: relative;
  width: 366px;
  padding: 5px 5px 4px;
  border: 1px solid #b4bbbe;
  border-width: 1px 2px 2px 1px;
  background: #434b53;
}
.tools {
  display: flex;
  align-items: center;
  gap: 3px;
  height: 12px;
}
.tools button {
  width: 10px;
  height: 10px;
  color: #15191d;
  font-size: 7px;
}
.tools svg {
  width: 9px;
  height: 9px;
}
.tools .white {
  color: #fff;
}
.tools .navy {
  color: #20246f;
}
.tools .flip {
  transform: scaleX(-1);
}
.tools .color {
  color: #1f2480;
  border-bottom: 2px solid #08090b;
  line-height: 7px;
}
.tools .mode {
  width: 13px;
  height: 13px;
  margin-left: auto;
  border: 1px solid #14181c;
}
.sep {
  width: 1px;
  height: 10px;
  margin-right: -1px;
  background: #8d9498;
}
.tools select {
  height: 10px;
  padding-left: 2px;
  appearance: none;
  color: #eef0f1;
  border: 1px solid #4c585f;
  background:
    conic-gradient(from -45deg at 50% 60%, #10151a 90deg, transparent 0) right 2px bottom 3px / 4px 3px no-repeat,
    linear-gradient(#3c454c, #3c454c) right / 8px 100% no-repeat,
    #515d64;
}
.tools .fonts {
  width: 66px;
}
.tools .sizes {
  width: 27px;
  margin-left: -2px;
}
.writing {
  display: flex;
  align-items: flex-start;
  gap: 3px;
  margin-top: 3px;
}
.writing textarea {
  flex: 1;
  height: 140px;
  resize: none;
  background: #454e56;
  border: 1px solid #c3c9cc;
  border-width: 1px 2px 2px 1px;
}
fieldset {
  border: 1px solid #b4bbbe;
}
legend {
  margin-left: 3px;
  padding: 0 1px;
  line-height: 8px;
  color: #fff;
}
.smilies {
  width: 48px;
  min-width: 0;
  height: 110px;
  padding: 3px 4px 0 7px;
}
.smilegrid {
  display: grid;
  grid-template-columns: 18px 18px;
  grid-template-rows: 22px 16px 15px 14px 13px;
  align-items: center;
  justify-items: center;
  margin-bottom: 2px;
}
.smilegrid svg {
  width: 10px;
  height: 10px;
}
.smilegrid .banana {
  width: 13px;
  height: 18px;
}
.smilegrid .big {
  width: 12px;
  height: 12px;
}
.smilegrid .small {
  width: 8px;
  height: 8px;
}
.c-yellow { color: #e0d46a; }
.c-gold { color: #e0a52c; }
.c-orange { color: #e08a3c; }
.c-red { color: #d8444a; }
.c-sky { color: #5fb4dc; }
.c-blue { color: #6ba6dc; }
.c-ice { color: #a9c3d6; }
.c-pink { color: #d27cc4; }
.c-violet { color: #7a74d0; }
.penmark {
  position: absolute;
  left: 155px;
  top: -9px;
  width: 26px;
  height: 34px;
  pointer-events: none;
}
.posticons {
  margin: 3px 0 0 2px;
  padding: 4px 5px 5px;
}
.posticons p {
  margin-bottom: 2px;
}
.icongrid {
  display: grid;
  grid-template-columns: 44px repeat(7, 40px);
  grid-auto-rows: 10px;
  padding-left: 4px;
}
.icongrid label {
  display: flex;
  align-items: center;
  gap: 2px;
}
.icongrid .none {
  grid-row: span 2;
  align-self: start;
  height: 10px;
}
.icongrid svg {
  width: 10px;
  height: 10px;
}
.icongrid input {
  flex: none;
  appearance: none;
  width: 7px;
  height: 7px;
  border-radius: 50%;
  background: #fff;
}
.icongrid input:checked {
  background: radial-gradient(#111 0 1px, #fff 2px);
}
.actions {
  display: flex;
  justify-content: center;
  gap: 3px;
  padding: 4px 0 3px;
}
.actions button {
  height: 11px;
  padding: 0 6px;
  border: 1px solid #b4bbbe;
  background: #434a54;
}
.ribs {
  flex: none;
  width: 24px;
  background: linear-gradient(90deg, #1b2023 0 8px, #2b3236 8px 14px, #13181b 14px 16px, #333b41 16px 20px, #14191c 20px 22px, #2f373c 22px);
}
.wall {
  flex: none;
  width: 26px;
  background: #394047;
}
.scallop {
  width: 7px;
  height: 100%;
  background: #394047;
}
.scrollbar {
  flex: none;
  display: flex;
  flex-direction: column;
  width: 9px;
  background: #eceae6;
}
.scrollbar button {
  height: 8px;
  background: #d4d0c8;
  border: 1px solid #fff;
  border-right-color: #555;
  border-bottom-color: #555;
}
.track {
  flex: 1;
}
.thumb {
  height: 37%;
  margin-top: 68px;
  background: #d4d0c8;
  border: 1px solid #fff;
  border-right-color: #555;
  border-bottom-color: #555;
}

/* status bar and taskbar */
.status {
  display: flex;
  align-items: center;
  justify-content: space-between;
  height: 20px;
  padding: 0 6px 0 3px;
  border-top: 1px solid #e4e1da;
}
.mcafee {
  display: flex;
  align-items: center;
  gap: 5px;
  height: 16px;
  padding-left: 5px;
  border-left: 1px solid #aaa69d;
}
.mcafee > .icon {
  width: 11px;
  height: 11px;
}
.mcafee input {
  width: 111px;
  height: 13px;
  padding-left: 3px;
  background: #fff;
  border: 1px solid #777;
  border-right-color: #eee;
  border-bottom-color: #eee;
}
.go {
  width: 12px;
  height: 12px;
  background: #e6e3dd;
  border: 1px solid #bbb;
}
.brand {
  gap: 2px;
  width: 57px;
  height: 11px;
  color: #fff;
  font-size: 7px;
  font-weight: bold;
  background: #3aa51e;
}
.brand svg {
  width: 8px;
  height: 8px;
}
.taskbar {
  display: flex;
  align-items: center;
  gap: 2px;
  height: 15px;
  padding-left: 1px;
  border-top: 1px solid #fff;
}
.start,
.task {
  height: 12px;
  gap: 2px;
  border: 1px solid #fff;
  border-right-color: #555;
  border-bottom-color: #555;
  white-space: nowrap;
}
.start {
  width: 29px;
  gap: 0;
  font-size: 6px;
  font-weight: bold;
}
.grip {
  width: 2px;
  height: 11px;
  margin: 0 1px;
  background: #c0b8a8;
}
.task {
  width: 88px;
  justify-content: flex-start;
  padding-left: 1px;
  overflow: hidden;
}
.task.active {
  font-weight: bold;
  background: #ebe8e3;
  border-color: #555 #fff #fff #555;
}
.tray {
  display: flex;
  align-items: center;
  gap: 3px;
  height: 12px;
  margin-left: auto;
  padding: 0 6px 0 3px;
  border: 1px solid #999;
  border-width: 1px 0 0 1px;
}
.tray time {
  margin-left: 4px;
}
```
